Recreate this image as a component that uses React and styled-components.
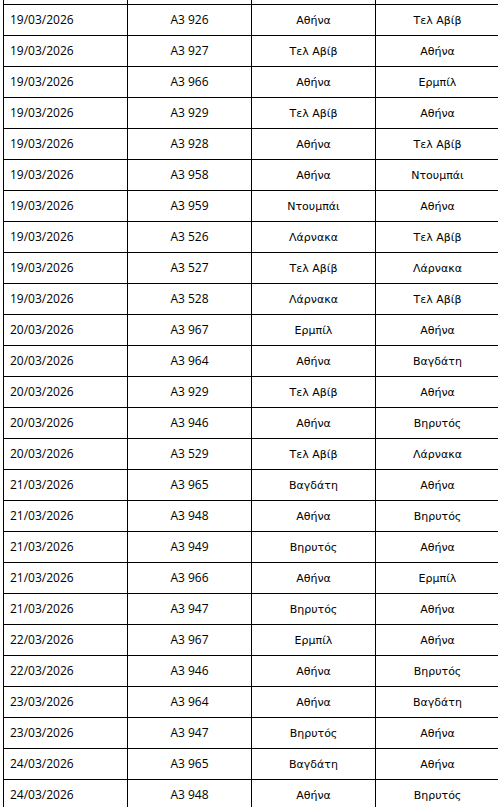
import React from "react";
import styled, { createGlobalStyle } from "styled-components";

const Global = createGlobalStyle`
  html, body { margin: 0; padding: 0; overflow: hidden; background: #fff; }
  body { font-family: "Open Sans", sans-serif; color: #000; }
`;

const Page = styled.div`
  padding-left: 3px;
  margin-top: -27px;
`;

const Table = styled.table`
  border-collapse: collapse;
  table-layout: fixed;
  width: 497px;
`;

const Row = styled.tr`
  height: 31px;
`;

const Cell = styled.td`
  width: 123px;
  height: 30px;
  border: 1px solid #000;
  padding: 0 ${(p) => (p.$left ? "6px" : "0")};
  text-align: ${(p) => (p.$left ? "left" : "center")};
  vertical-align: middle;
  font-family: ${(p) =>
    p.$city ? '"DejaVu Sans", Verdana, sans-serif' : '"Open Sans", sans-serif'};
  font-size: ${(p) => (p.$city ? "11px" : "12px")};
  line-height: 1;
  white-space: nowrap;
  box-sizing: border-box;
`;

const rows = [
  ["", "", "", ""],
  ["19/03/2026", "A3 926", "Αθήνα", "Τελ Αβίβ"],
  ["19/03/2026", "A3 927", "Τελ Αβίβ", "Αθήνα"],
  ["19/03/2026", "A3 966", "Αθήνα", "Ερμπίλ"],
  ["19/03/2026", "A3 929", "Τελ Αβίβ", "Αθήνα"],
  ["19/03/2026", "A3 928", "Αθήνα", "Τελ Αβίβ"],
  ["19/03/2026", "A3 958", "Αθήνα", "Ντουμπάι"],
  ["19/03/2026", "A3 959", "Ντουμπάι", "Αθήνα"],
  ["19/03/2026", "A3 526", "Λάρνακα", "Τελ Αβίβ"],
  ["19/03/2026", "A3 527", "Τελ Αβίβ", "Λάρνακα"],
  ["19/03/2026", "A3 528", "Λάρνακα", "Τελ Αβίβ"],
  ["20/03/2026", "A3 967", "Ερμπίλ", "Αθήνα"],
  ["20/03/2026", "A3 964", "Αθήνα", "Βαγδάτη"],
  ["20/03/2026", "A3 929", "Τελ Αβίβ", "Αθήνα"],
  ["20/03/2026", "A3 946", "Αθήνα", "Βηρυτός"],
  ["20/03/2026", "A3 529", "Τελ Αβίβ", "Λάρνακα"],
  ["21/03/2026", "A3 965", "Βαγδάτη", "Αθήνα"],
  ["21/03/2026", "A3 948", "Αθήνα", "Βηρυτός"],
  ["21/03/2026", "A3 949", "Βηρυτός", "Αθήνα"],
  ["21/03/2026", "A3 966", "Αθήνα", "Ερμπίλ"],
  ["21/03/2026", "A3 947", "Βηρυτός", "Αθήνα"],
  ["22/03/2026", "A3 967", "Ερμπίλ", "Αθήνα"],
  ["22/03/2026", "A3 946", "Αθήνα", "Βηρυτός"],
  ["23/03/2026", "A3 964", "Αθήνα", "Βαγδάτη"],
  ["23/03/2026", "A3 947", "Βηρυτός", "Αθήνα"],
  ["24/03/2026", "A3 965", "Βαγδάτη", "Αθήνα"],
  ["24/03/2026", "A3 948", "Αθήνα", "Βηρυτός"],
];

export default function App() {
  return (
    <>
      <Global />
      <Page>
        <Table>
          <tbody>
            {rows.map((r, i) => (
              <Row key={i}>
                <Cell $left>{r[0]}</Cell>
                <Cell>{r[1]}</Cell>
                <Cell $city>{r[2]}</Cell>
                <Cell $city>{r[3]}</Cell>
              </Row>
            ))}
          </tbody>
        </Table>
      </Page>
    </>
  );
}
